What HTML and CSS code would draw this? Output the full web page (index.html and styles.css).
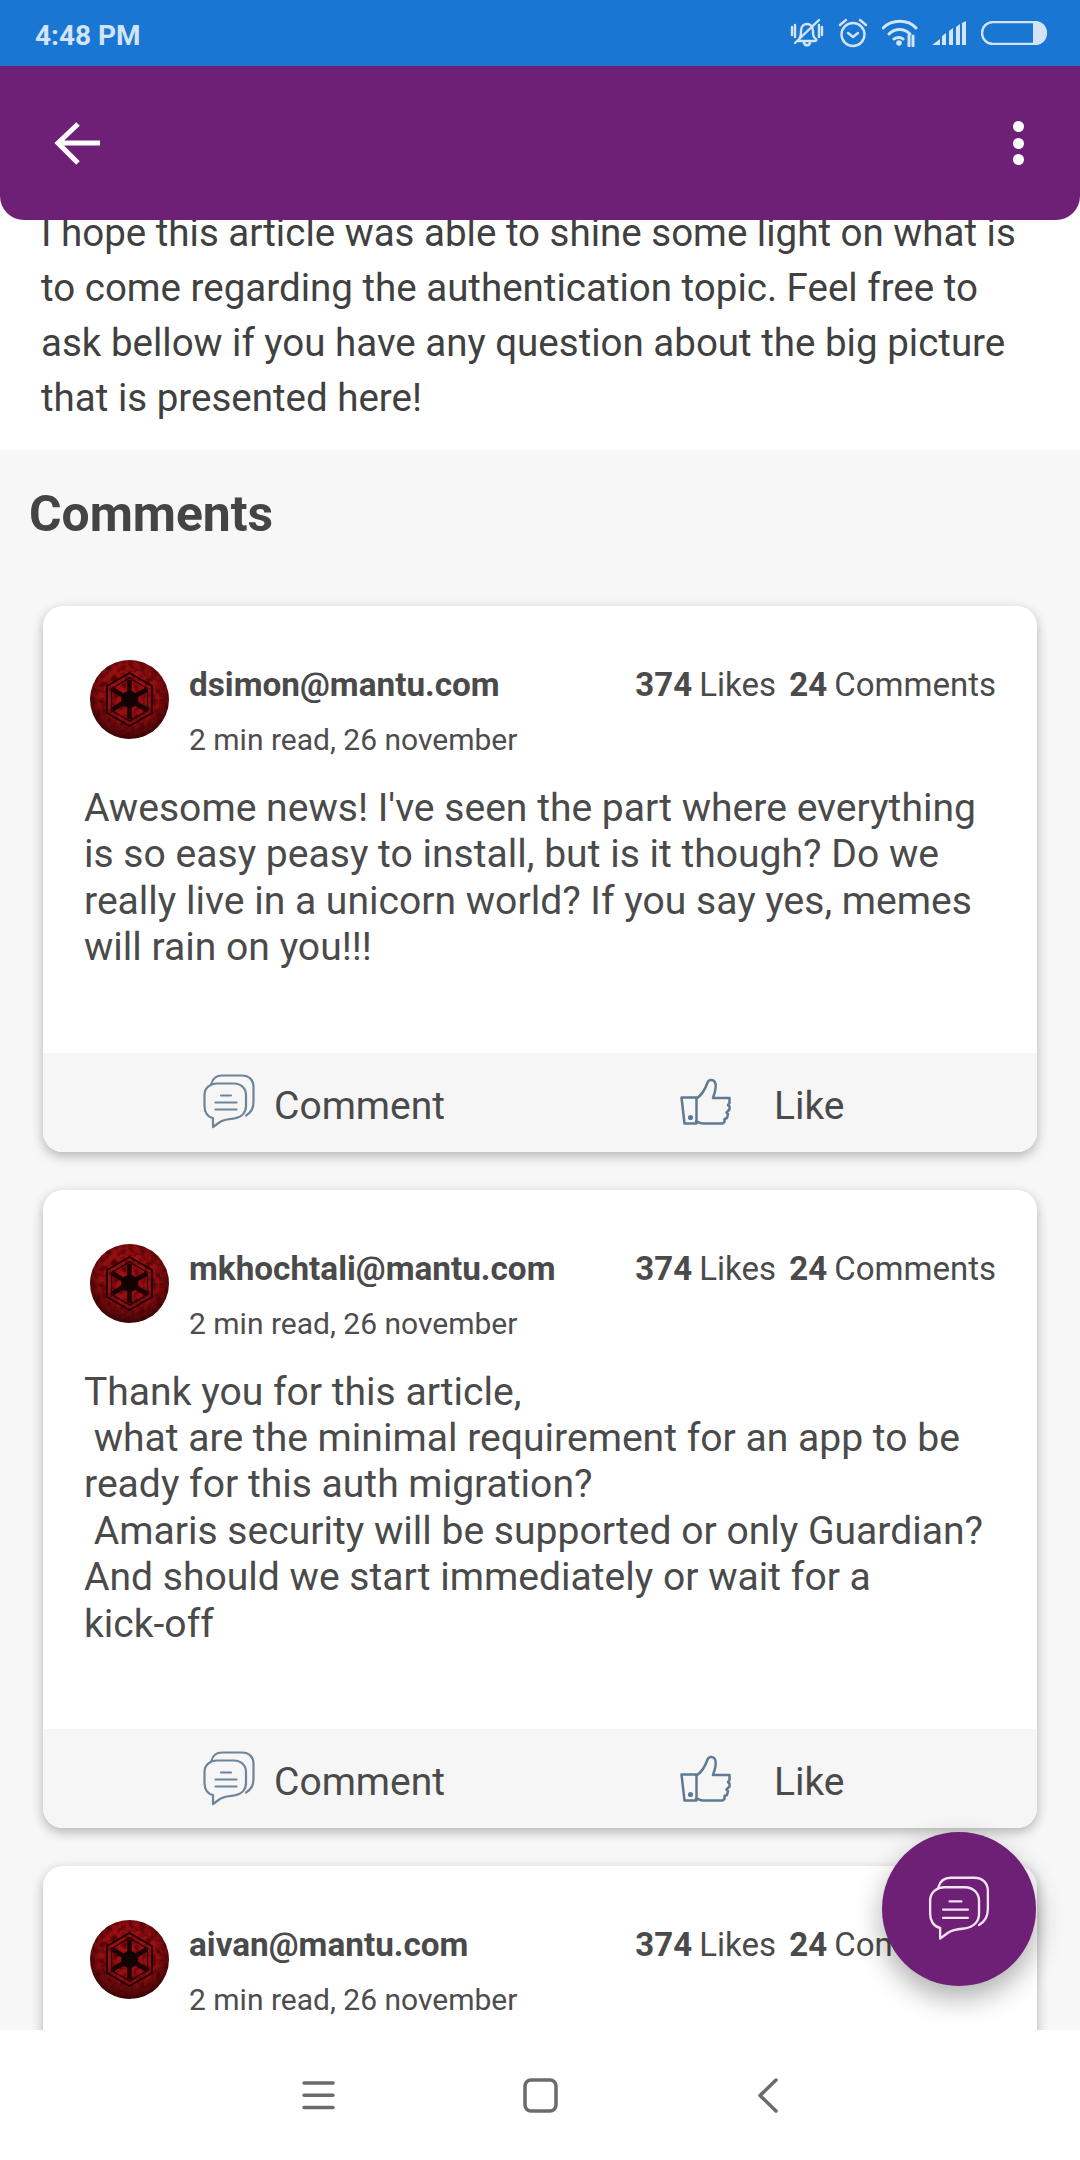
FILE: index.html
```html
<!DOCTYPE html>
<html lang="en">
<head>
<meta charset="utf-8">
<title>Article comments</title>
<link rel="stylesheet" href="styles.css">
</head>
<body>
<svg class="defs" width="0" height="0" aria-hidden="true">
  <defs>
    <radialGradient id="red" cx="50%" cy="42%" r="60%">
      <stop offset="0" stop-color="#a81014"/>
      <stop offset="0.6" stop-color="#960e12"/>
      <stop offset="1" stop-color="#300406"/>
    </radialGradient>
    <filter id="grain" x="0" y="0" width="100%" height="100%">
      <feTurbulence type="fractalNoise" baseFrequency="0.18" numOctaves="3" seed="4"/>
      <feColorMatrix values="0 0 0 0 0.05  0 0 0 0 0  0 0 0 0 0  1.8 0 0 0 -0.65"/>
    </filter>
    <clipPath id="disc"><circle cx="39.500" cy="39.500" r="39.500"/></clipPath>
    <symbol id="sith" viewBox="0 0 79 79">
      <circle cx="39.500" cy="39.500" r="39.500" fill="url(#red)"/>
      <rect width="79" height="79" filter="url(#grain)" clip-path="url(#disc)"/>
      <path d="M39.500 13 62 26v27L39.500 66 17 53V26z" fill="none" stroke="#1a0204" stroke-width="1.800"/>
      <path d="M39.500 18 57.500 28.500v22L39.500 61 21.500 50.500v-22z" fill="none" stroke="#1a0204" stroke-width="1.200"/>
      <path d="M39.500 20v39M22.500 29.500l34 20M56.500 29.500l-34 20" stroke="#1c0204" stroke-width="4.500"/>
      <circle cx="39.500" cy="39.500" r="8.500" fill="#120103"/>
    </symbol>
    <symbol id="chat" viewBox="0 0 52 56">
      <path d="M8.500 9.500C10 4 14 1.500 19 1.500h20C46 1.500 50.500 6 50.500 13v15c0 6-3 11-7.500 13.500"/>
      <path d="M14 9.500h17c7 0 12 5 12 11.500v11c0 7-5 11.500-12 12.500-6 .6-11 1-14 3.500l-7 5v-9C4.500 43 1.500 38 1.500 32V21C1.500 14 7 9.500 14 9.500z"/>
      <path d="M18 21.500h10M12.500 28.500h21M12.500 35.500h21"/>
    </symbol>
    <symbol id="thumb" viewBox="0 0 52 48">
      <path d="M1.500 19.500h15v26H4.500z"/>
      <path d="M16.500 20.500c6-4 9-10 11-16 1-3 5-3.500 7-1 3 4 .5 11-1.500 16.500h16.500v5l-1.500 2 1.500 1.500v3l-3 3 1.500 1.500-1 4-2.500 1v3l-2 1.500H23c-3 0-5-2-7-2"/>
      <circle cx="10.500" cy="39.500" r="1.300" class="dot"/>
    </symbol>
  </defs>
</svg>
<div class="phone">
  <div class="status">
    <span class="time">4:48 PM</span>
    <div class="status-icons">
      <svg class="si" width="34" height="30" viewBox="0 0 34 30"><path d="M9 21c2-2 2-4 2-8 0-5 3-7 6-7s6 2 6 7c0 4 0 6 3 8 1 1 0 2-1 2H9c-1 0-1-1 0-2zM14 25c1 3 5 3 6 0M5 25 29 2M2 9v8M5 7v12M32 9v8M29 7v12"/></svg>
      <svg class="si" width="30" height="30" viewBox="0 0 30 30"><circle cx="15" cy="16.500" r="11.500"/><path d="M10 15l5 4 5-4M2 7l6-5M28 7l-6-5"/></svg>
      <svg class="si" width="36" height="28" viewBox="0 0 36 28"><path d="M1 9c9-9 25-9 33 0M7 15c6-6 15-6 21 0M12 20c3-2 7-2 9 0M27 16v11M31 17v10" stroke-width="3"/><circle cx="17" cy="24" r="2.800" class="fill"/></svg>
      <svg class="si fill" width="35" height="24" viewBox="0 0 35 24"><path d="M0 24 8 18v6zM10 24V15l4-3v12zM17 24V10l4-3v17zM24 24V6l4-3v21zM30 24V2l4-2v24z"/></svg>
      <svg class="si" width="66" height="24" viewBox="0 0 66 24"><rect x="1" y="1" width="64" height="22" rx="11"/><path class="fill" d="M52 1.500h2c6 0 10 4.500 10 10.500s-4 10.500-10 10.500h-2z"/></svg>
    </div>
  </div>
  <header class="appbar">
    <svg class="back" width="44" height="44" viewBox="0 0 44 44"><path d="M24 3 4 22l20 20M4 22h42"/></svg>
    <div class="more"><i></i><i></i><i></i></div>
  </header>
  <main class="content">
    <section class="article">
      <p>I hope this article was able to shine some light on what is to come regarding the authentication topic. Feel free to ask bellow if you have any question about the big picture that is presented here!</p>
    </section>
    <section class="comments">
      <h2>Comments</h2>
      <article class="card">
        <div class="head">
          <svg class="avatar"><use href="#sith"/></svg>
          <div class="meta">
            <div class="row"><span class="name">dsimon@mantu.com</span><span class="stats"><b>374</b> Likes <b class="second">24</b> Comments</span></div>
            <div class="date">2 min read, 26 november</div>
          </div>
        </div>
        <p class="text">Awesome news! I've seen the part where everything is so easy peasy to install, but is it though? Do we really live in a unicorn world? If you say yes, memes will rain on you!!!</p>
        <div class="actions">
          <div class="action"><svg class="ai"><use href="#chat"/></svg><span class="label">Comment</span></div>
          <div class="action like"><svg class="ai thumb"><use href="#thumb"/></svg><span class="label">Like</span></div>
        </div>
      </article>
      <article class="card">
        <div class="head">
          <svg class="avatar"><use href="#sith"/></svg>
          <div class="meta">
            <div class="row"><span class="name">mkhochtali@mantu.com</span><span class="stats"><b>374</b> Likes <b class="second">24</b> Comments</span></div>
            <div class="date">2 min read, 26 november</div>
          </div>
        </div>
        <p class="text">Thank you for this article,<br>&nbsp;what are the minimal requirement for an app to be ready for this auth migration?<br>&nbsp;Amaris security will be supported or only Guardian?<br>And should we start immediately or wait for a<br>kick-off</p>
        <div class="actions">
          <div class="action"><svg class="ai"><use href="#chat"/></svg><span class="label">Comment</span></div>
          <div class="action like"><svg class="ai thumb"><use href="#thumb"/></svg><span class="label">Like</span></div>
        </div>
      </article>
      <article class="card card-cut">
        <div class="head">
          <svg class="avatar"><use href="#sith"/></svg>
          <div class="meta">
            <div class="row"><span class="name">aivan@mantu.com</span><span class="stats"><b>374</b> Likes <b class="second">24</b> Comments</span></div>
            <div class="date">2 min read, 26 november</div>
          </div>
        </div>
      </article>
    </section>
    <button class="fab" aria-label="Comment"><svg class="fab-icon"><use href="#chat"/></svg></button>
  </main>
  <nav class="navbar">
    <svg class="nv" width="33" height="30" viewBox="0 0 33 30"><path d="M2 3h29M2 15.300h29M2 27.600h29"/></svg>
    <svg class="nv" width="35" height="35" viewBox="0 0 35 35"><rect x="2" y="2" width="31" height="31" rx="6"/></svg>
    <svg class="nv nv-back" width="20" height="35" viewBox="0 0 20 35"><path d="M18 2 2 17.500 18 33"/></svg>
  </nav>
</div>
</body>
</html>
```
FILE: styles.css
```css
* { box-sizing: border-box; }
html, body { margin: 0; padding: 0; }
body { width: 1080px; height: 2160px; overflow: hidden; font-family: Roboto, "Liberation Sans", sans-serif; color: #4a4a4a; background: #fff; }
.defs { position: absolute; }
.phone { width: 1080px; height: 2160px; display: flex; flex-direction: column; }

.status { height: 66px; flex: none; background: #1976d2; color: #d2e4f6; display: flex; align-items: center; justify-content: space-between; padding: 4px 33px 0 35px; }
.time { font-size: 28px; font-weight: 700; }
.status-icons { display: flex; align-items: center; gap: 14px; margin-top: -4px; }
.si { fill: none; stroke: #d2e4f6; stroke-width: 2.400; stroke-linecap: round; stroke-linejoin: round; }
.si.fill, .si .fill { fill: #d2e4f6; stroke: none; }

.appbar { height: 154px; flex: none; background: #6e2076; border-radius: 0 0 24px 24px; display: flex; align-items: center; justify-content: space-between; padding: 0 56px 0 54px; position: relative; z-index: 2; }
.back { fill: none; stroke: #fff; stroke-width: 5; overflow: visible; width: 44px; }
.more { display: flex; flex-direction: column; gap: 5.500px; width: 12px; align-items: center; }
.more i { width: 11px; height: 11px; border-radius: 50%; background: #fff; display: block; }

.content { flex: 1; min-height: 0; overflow: hidden; position: relative; background: #f7f7f7; }
.article { background: #fff; height: 230px; padding: 0 50px 0 41px; overflow: hidden; }
.article p { margin: -15px 0 0; font-size: 38.500px; line-height: 55px; color: #404040; }
.comments { padding: 0 43px; }
.comments h2 { margin: 0 0 0 -14px; padding-top: 36px; font-size: 49.800px; line-height: 56px; height: 156px; font-weight: 700; color: #444; }

.card { background: #fff; border-radius: 20px; box-shadow: 0 4px 12px rgba(0,0,0,.28); margin-bottom: 38px; overflow: hidden; }
.card-cut { min-height: 400px; }
.head { display: flex; padding: 54px 41px 0 47px; height: 179px; }
.avatar { width: 79px; height: 79px; flex: none; }
.meta { flex: 1; margin-left: 20px; margin-top: 4px; }
.row { display: flex; justify-content: space-between; align-items: baseline; }
.name { font-size: 33.300px; line-height: 42px; font-weight: 700; color: #4a4a4a; }
.stats { font-size: 33px; line-height: 42px; word-spacing: -1px; }
.stats b { font-weight: 700; }
.second { margin-left: 6px; }
.date { font-size: 30px; line-height: 42px; margin-top: 13px; color: #4d4d4d; }
.text { margin: 0; padding: 0 41px; font-size: 39.100px; line-height: 46.400px; color: #4a4a4a; }
.actions { margin-top: 82px; height: 99px; background: #f6f6f6; display: grid; grid-template-columns: 477px 1fr; padding-left: 160px; align-items: center; }
.action { display: flex; align-items: center; gap: 19px; font-size: 39px; color: #4a4a4a; }
.label { padding-top: 7px; }
.like { gap: 42px; }
.ai { width: 52px; height: 56px; fill: none; stroke: #6d8499; stroke-width: 2.200; stroke-linecap: round; stroke-linejoin: round; }
.thumb { height: 48px; stroke: #5f7a92; stroke-width: 2.500; }
.dot { fill: #5f7a92; }

.fab { position: absolute; left: 882px; top: 1612px; width: 154px; height: 154px; border: 0; border-radius: 50%; background: #6e2076; box-shadow: 0 12px 28px rgba(0,0,0,.32); display: flex; align-items: center; justify-content: center; padding: 0; }
.fab-icon { width: 66px; height: 66px; fill: none; stroke: #f0e4f0; stroke-width: 2; stroke-linecap: round; stroke-linejoin: round; }

.navbar { height: 130px; flex: none; background: #fff; display: flex; align-items: center; padding-left: 302px; position: relative; z-index: 1; gap: 188px; }
.nv { fill: none; stroke: #6b6b6b; stroke-width: 3.500; stroke-linecap: round; stroke-linejoin: round; }
.nv-back { margin-left: 12px; }
```
